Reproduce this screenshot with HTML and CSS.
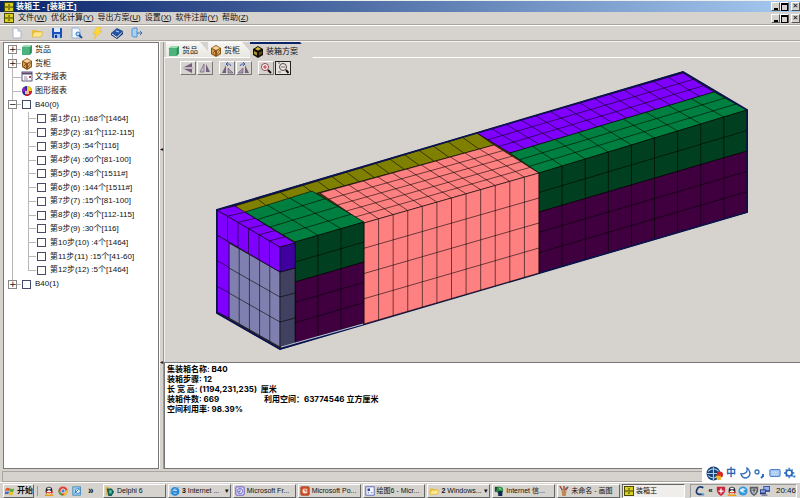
FILE: index.html
```html
<!DOCTYPE html>
<html lang="zh-CN">
<head>
<meta charset="utf-8">
<title>装箱王</title>
<link rel="stylesheet" href="styles.css">
</head>
<body>
<svg class="defs" aria-hidden="true">
  <symbol id="app" viewBox="0 0 10 10"><rect x="0" y="0" width="10" height="10" fill="#4a4a00"/><rect x="1" y="1" width="8" height="8" fill="#d8d020"/><path d="M1 5h8M4 3h2M4 7h2" stroke="#3a3a00"/></symbol>
  <symbol id="new" viewBox="0 0 12 12"><path d="M2 1h5l3 3v7H2z" fill="#fff" stroke="#a8b4cc"/><path d="M7 1v3h3" fill="#dce6f8" stroke="#a8b4cc"/></symbol>
  <symbol id="open" viewBox="0 0 12 12"><path d="M1 3h4l1 1h4v6H1z" fill="#e8c040"/><path d="M3 5h9l-2 5H1z" fill="#ffe88c" stroke="#d8a830" stroke-width=".6"/></symbol>
  <symbol id="save" viewBox="0 0 12 12"><rect x="1" y="1" width="10" height="10" rx="1" fill="#1c50b8"/><rect x="3" y="1" width="6" height="4" fill="#d8e8ff"/><rect x="3" y="7" width="6" height="4" fill="#9cc0f4"/><rect x="4" y="8" width="2" height="3" fill="#123a88"/></symbol>
  <symbol id="preview" viewBox="0 0 12 12"><path d="M1 1h6l2 2v8H1z" fill="#f4f8ff" stroke="#90b0dc"/><circle cx="7" cy="7" r="2" fill="#bcdcff" stroke="#3878c0"/><path d="M8 8l3 3" stroke="#24508c" stroke-width="2"/></symbol>
  <symbol id="bolt" viewBox="0 0 12 12"><path d="M6 0h4L8 4h3L3 12l2-5H2z" fill="#ffd83c" stroke="#e8b020" stroke-width=".5"/></symbol>
  <symbol id="book" viewBox="0 0 12 12"><path d="M6 1l6 3-6 6-6-4z" fill="#2454a0"/><path d="M0 6l6 4 6-6v3l-6 5-6-4z" fill="#0c2c68"/><path d="M1 7l5 3.500 5-5" stroke="#e8f0ff" fill="none"/><path d="M5 4l3 1" stroke="#b8d8ff"/></symbol>
  <symbol id="exit" viewBox="0 0 12 12"><path d="M3 1h3v9H3L1 9V2z" fill="#a8d0f4" stroke="#4084c8" stroke-width=".8"/><path d="M6 6h5M9 4l2 2-2 2" stroke="#3474bc" fill="none"/></symbol>
  <symbol id="goods" viewBox="0 0 11 11"><path d="M1 3l2-2h7v7l-2 2H1z" fill="#2c8c5c"/><path d="M1 3l2-2h7L8 3z" fill="#9cdcb4"/><path d="M1 3h7v7H1z" fill="#4cb47c"/></symbol>
  <symbol id="crate" viewBox="0 0 12 12"><path d="M6 0l5 3v6l-5 3-5-3V3z" fill="#8c5418"/><path d="M6 1l4 2-4 2-4-2z" fill="#f4d49c"/><path d="M2 4l3 2v4L2 8z" fill="#dca04c"/><path d="M7 6l3-2v4l-3 2z" fill="#ecc078"/><path d="M3 8l2-2M7 9l3-4" stroke="#503010" stroke-width=".7"/></symbol>
  <symbol id="plan" viewBox="0 0 12 12"><path d="M6 0l5 3v6l-5 3-5-3V3z" fill="#141008"/><path d="M6 1l3 2-3 1.500L3 3z" fill="#d8b838"/><path d="M2 5l3 1.500v3L2 8z" fill="#b49428"/><path d="M7 6.500L10 5v3L7 9.500z" fill="#5c4810"/></symbol>
  <symbol id="report" viewBox="0 0 12 12"><rect x="1" y="1" width="10" height="9" fill="#fff" stroke="#585878"/><path d="M1 2.500h10" stroke="#604870" stroke-width="2"/><path d="M3 6h3M3 8h4" stroke="#98a"/><rect x="8" y="5" width="2" height="2" fill="#a44"/></symbol>
  <symbol id="chart" viewBox="0 0 12 12"><circle cx="6" cy="6" r="5" fill="#2828a0"/><path d="M6 6V1a5 5 0 0 1 5 5z" fill="#f0d020"/><path d="M6 6h5a5 5 0 0 1-7 4.500z" fill="#d82020"/><path d="M6 6L1 7a5 5 0 0 1 2-5z" fill="#8828b0"/><path d="M4 6h4v3H4z" fill="#f0b8a0"/></symbol>
  <symbol id="flipv" viewBox="0 0 12 12"><path d="M10 1v4H2zM10 7v4L2 7z" fill="#74607c"/><path d="M1 6h10" stroke="#a898b0"/></symbol>
  <symbol id="fliph" viewBox="0 0 12 12"><path d="M5 2v8H1z" fill="#c8bccc" stroke="#74607c" stroke-width=".7"/><path d="M7 2v8h4z" fill="#74607c"/></symbol>
  <symbol id="rotl" viewBox="0 0 12 12"><path d="M5 3v8H1z" fill="#74607c"/><path d="M7 6v5h5z" fill="#a898b0" stroke="#74607c" stroke-width=".7"/><path d="M10 4q-1-3-4-2M7 0L5 2l2 2" fill="none" stroke="#405cb0"/></symbol>
  <symbol id="rotr" viewBox="0 0 12 12"><path d="M7 3v8h4z" fill="#74607c"/><path d="M5 6v5H0z" fill="#a898b0" stroke="#74607c" stroke-width=".7"/><path d="M2 4q1-3 4-2M5 0l2 2-2 2" fill="none" stroke="#405cb0"/></symbol>
  <symbol id="zin" viewBox="0 0 12 12"><circle cx="5" cy="5" r="3.500" fill="#fff" stroke="#8c4444"/><path d="M3 5h4M5 3v4" stroke="#c03030"/><path d="M8 8l3 3" stroke="#181010" stroke-width="2"/></symbol>
  <symbol id="zout" viewBox="0 0 12 12"><circle cx="6" cy="5" r="3.500" fill="#ece8e4" stroke="#584848"/><path d="M4 5h4" stroke="#806868"/><path d="M9 8l2.500 3" stroke="#181010" stroke-width="2"/><path d="M1 1h2M1 10h3" stroke="#807878"/></symbol>
  <symbol id="win" viewBox="0 0 12 12"><path d="M1 3q2-2 5 0L5 6Q3 5 0 6z" fill="#e05828"/><path d="M6 3q3 1 5 0l-1 4q-3 1-5-1z" fill="#58b040"/><path d="M0 7q3-1 5 0l-1 3q-2-1-4 0z" fill="#3870d8"/><path d="M5 7q3 1 5 0l-1 4q-3 1-5-1z" fill="#f0c028"/></symbol>
  <symbol id="qq" viewBox="0 0 12 12"><ellipse cx="6" cy="6" rx="4" ry="5" fill="#1c1c24"/><ellipse cx="6" cy="8" rx="3" ry="3" fill="#fff"/><path d="M2 6q4 3 8 0l1 2-5 1-4-1z" fill="#e03820"/><path d="M1 10h10v2H1z" fill="#e8a020"/><path d="M4 3h4" stroke="#fff" stroke-width="2"/></symbol>
  <symbol id="chrome" viewBox="0 0 12 12"><circle cx="6" cy="6" r="5.500" fill="#e04030"/><path d="M1 4l5 8A6 6 0 0 1 1 4z" fill="#40a848"/><path d="M11 4a6 6 0 0 1-5 8l3-5z" fill="#f4cc28"/><circle cx="6" cy="6" r="2.500" fill="#4080dc" stroke="#fff"/></symbol>
  <symbol id="mail" viewBox="0 0 12 12"><rect x="1" y="1" width="9" height="10" fill="#9cd4f4" stroke="#3880b8"/><circle cx="7" cy="6" r="3" fill="#e4f6ff" stroke="#2c78b4"/><path d="M3 9l5-5" stroke="#1c68ac"/></symbol>
  <symbol id="delphi" viewBox="0 0 12 12"><path d="M1 1h4v10H1z" fill="#e0b850"/><path d="M2 3h6l3 4-3 5H4z" fill="#146058"/><path d="M5 5h3v4H5z" fill="#58c0a4"/></symbol>
  <symbol id="ie" viewBox="0 0 12 12"><circle cx="6" cy="6.500" r="4" fill="none" stroke="#2088dc" stroke-width="2.500"/><path d="M3 7h7" stroke="#2088dc" stroke-width="2"/><path d="M0 10Q3 1 12 2" fill="none" stroke="#70b8ec"/></symbol>
  <symbol id="fp" viewBox="0 0 12 12"><rect x="1" y="1" width="10" height="10" rx="1" fill="#dcd8fc" stroke="#544cb4"/><circle cx="6" cy="6" r="3" fill="#fff" stroke="#5c50c8"/><path d="M6 4v3H4" stroke="#403898" fill="none"/></symbol>
  <symbol id="ppt" viewBox="0 0 12 12"><rect x="1" y="1" width="10" height="10" rx="1" fill="#d8542c" stroke="#a03414"/><circle cx="6" cy="6" r="3" fill="#fce4d8"/><path d="M6 3v3h3" stroke="#c04018" fill="none"/></symbol>
  <symbol id="visio" viewBox="0 0 12 12"><rect x="1" y="1" width="10" height="10" fill="#f4f6ff" stroke="#5060b8"/><path d="M3 3h3v3H3z" fill="#3848a8"/><path d="M7 8h2M4 9V7" stroke="#5868c8"/></symbol>
  <symbol id="iis" viewBox="0 0 12 12"><path d="M1 1h6v6H1z" fill="#184c28"/><circle cx="7" cy="5" r="4" fill="#30904c"/><path d="M5 6h5v6H5z" fill="#102c4c"/><path d="M6 3l3 1" stroke="#c8f0b0"/></symbol>
  <symbol id="paint" viewBox="0 0 12 12"><path d="M3 5h6l-1 7H4z" fill="#c08850"/><path d="M4 5L1 0M6 5V0M8 5l3-4" stroke="#a03c24" stroke-width="1.500"/><path d="M7 5l2-4" stroke="#2868a8"/></symbol>
  <symbol id="shield" viewBox="0 0 12 12"><path d="M1 1h10v5q-1 4-5 6Q2 10 1 6z" fill="#c82838"/><path d="M6 3v6M3 6h6" stroke="#fff" stroke-width="1.500"/></symbol>
  <symbol id="shield2" viewBox="0 0 12 12"><path d="M1 1h10v5q-1 4-5 6Q2 10 1 6z" fill="#585c64"/><path d="M3 3h6v3q-1 3-3 4Q4 9 3 6z" fill="#c4c8cc"/><path d="M4 5h4M6 3v5" stroke="#34383c"/></symbol>
  <symbol id="ball" viewBox="0 0 12 12"><circle cx="6" cy="6" r="5.500" fill="#3498dc"/><path d="M2 5q3-4 7-1l-3 2 3 2Q4 9 2 5z" fill="#d8f0ff"/></symbol>
  <symbol id="net" viewBox="0 0 12 12"><rect x="4" y="0" width="8" height="7" fill="#384898"/><rect x="5" y="1" width="6" height="4" fill="#90b0f0"/><rect x="0" y="4" width="7" height="6" fill="#283878"/><rect x="1" y="5" width="5" height="3" fill="#80a0e8"/><path d="M2 11h7" stroke="#404878"/></symbol>
  <symbol id="cring" viewBox="0 0 12 12"><path d="M10 2Q4-1 2 5t8 5" fill="none" stroke="#1c3870" stroke-width="2"/><path d="M8 9l3 2" stroke="#60a0d8" stroke-width="2"/></symbol>
  <symbol id="ime" viewBox="0 0 16 14"><circle cx="7" cy="7" r="6.500" fill="#184074"/><path d="M2 5q5-5 10 0M2 9q5 4 8 1M7 1v12M1 7h12" stroke="#a8d4f4" fill="none"/><circle cx="13" cy="8" r="3" fill="#d82820"/><path d="M9 9h5v4q-4 1-5-4z" fill="#f0b828"/></symbol>
  <symbol id="moon" viewBox="0 0 12 12"><path d="M8 1q1 6-6 6 1 4 5 4 4-1 4-5-1-4-3-5z" fill="#fff" stroke="#2c6cc0" stroke-width="1.300"/></symbol>
  <symbol id="punct" viewBox="0 0 12 12"><circle cx="3" cy="5" r="2" fill="none" stroke="#2c6cc0" stroke-width="1.300"/><path d="M9 7v2l-2 2" stroke="#2c6cc0" stroke-width="2" fill="none"/></symbol>
  <symbol id="keys" viewBox="0 0 14 12"><rect x="1" y="2" width="12" height="8" rx="1" fill="#a8c8f0" stroke="#2c6cc0"/><path d="M3 5h8M4 8h6" stroke="#fff" stroke-dasharray="1 1"/></symbol>
  <symbol id="gear" viewBox="0 0 14 12"><circle cx="6" cy="6" r="3.500" fill="none" stroke="#2468bc" stroke-width="2"/><path d="M6 0v2M6 10v2M0 6h2M10 6h2M2 2l1 1M9 9l1 1M2 10l1-1M9 3l1-1" stroke="#2468bc" stroke-width="1.500"/><circle cx="12" cy="10" r="1.500" fill="#5090d8"/></symbol>
</svg>

<header class="titlebar">
  <svg class="i10"><use href="#app"/></svg>
  <h1>装箱王 - [装箱王]</h1>
  <div class="winbtns"><button aria-label="最小化" class="min"></button><button aria-label="还原" class="restore"></button><button aria-label="关闭" class="close">✕</button></div>
</header>
<nav class="menubar">
  <svg class="i10"><use href="#app"/></svg>
  <button>文件(<u>W</u>)</button><button>优化计算(<u>Y</u>)</button><button>导出方案(<u>U</u>)</button><button>设置(<u>X</u>)</button><button>软件注册(<u>Y</u>)</button><button>帮助(<u>Z</u>)</button>
  <div class="winbtns"><button aria-label="最小化" class="min"></button><button aria-label="还原" class="restore"></button><button aria-label="关闭" class="close">✕</button></div>
</nav>
<div class="toolbar">
  <button aria-label="新建"><svg><use href="#new"/></svg></button>
  <button aria-label="打开"><svg><use href="#open"/></svg></button>
  <button aria-label="保存"><svg><use href="#save"/></svg></button>
  <button aria-label="预览"><svg><use href="#preview"/></svg></button>
  <button aria-label="计算"><svg><use href="#bolt"/></svg></button>
  <button aria-label="手册"><svg><use href="#book"/></svg></button>
  <button aria-label="退出"><svg><use href="#exit"/></svg></button>
</div>

<main class="work">
  <aside class="panel">
    <ul class="tree">
      <li class="first"><button class="exp" aria-label="展开">+</button><svg><use href="#goods"/></svg><span>货品</span></li>
      <li><button class="exp" aria-label="展开">+</button><svg><use href="#crate"/></svg><span>货柜</span></li>
      <li><i class="exp none"></i><svg><use href="#report"/></svg><span>文字报表</span></li>
      <li><i class="exp none"></i><svg><use href="#chart"/></svg><span>图形报表</span></li>
      <li><button class="exp" aria-label="折叠">−</button><label><input type="checkbox">B40(0)</label></li>
      <li class="step"><label><input type="checkbox">第1步(1) :168个[1464]</label></li>
      <li class="step"><label><input type="checkbox">第2步(2) :81个[112-115]</label></li>
      <li class="step"><label><input type="checkbox">第3步(3) :54个[116]</label></li>
      <li class="step"><label><input type="checkbox">第4步(4) :60个[81-100]</label></li>
      <li class="step"><label><input type="checkbox">第5步(5) :48个[1511#]</label></li>
      <li class="step"><label><input type="checkbox">第6步(6) :144个[1511#]</label></li>
      <li class="step"><label><input type="checkbox">第7步(7) :15个[81-100]</label></li>
      <li class="step"><label><input type="checkbox">第8步(8) :45个[112-115]</label></li>
      <li class="step"><label><input type="checkbox">第9步(9) :30个[116]</label></li>
      <li class="step"><label><input type="checkbox">第10步(10) :4个[1464]</label></li>
      <li class="step"><label><input type="checkbox">第11步(11) :15个[41-60]</label></li>
      <li class="step end"><label><input type="checkbox">第12步(12) :5个[1464]</label></li>
      <li class="last"><button class="exp" aria-label="展开">+</button><label><input type="checkbox">B40(1)</label></li>
    </ul>
  </aside>
  <div class="splitter"><span>◂</span><span>◂</span></div>
  <section class="content">
    <div class="tabs">
      <button><svg><use href="#goods"/></svg>货品</button>
      <button><svg><use href="#crate"/></svg>货柜</button>
      <button class="on"><svg><use href="#plan"/></svg>装箱方案</button>
    </div>
    <div class="view">
      <svg id="scene" viewBox="165 57 635 304" preserveAspectRatio="xMinYMin meet" role="img" aria-label="装箱方案"></svg>
      <div class="viewbar">
        <div><button aria-label="上下翻转"><svg><use href="#flipv"/></svg></button><button aria-label="左右翻转"><svg><use href="#fliph"/></svg></button></div>
        <div><button aria-label="左转"><svg><use href="#rotl"/></svg></button><button aria-label="右转"><svg><use href="#rotr"/></svg></button></div>
        <div><button aria-label="放大"><svg><use href="#zin"/></svg></button><button class="pressed" aria-label="缩小"><svg><use href="#zout"/></svg></button></div>
      </div>
    </div>
    <div class="info">
      <p>集装箱名称: B40</p>
      <p>装箱步骤: 12</p>
      <p>长 宽 高: (1194,231,235)&nbsp; 厘米</p>
      <p class="pair"><span>装箱件数: 669</span><span>利用空间：63774546 立方厘米</span></p>
      <p>空间利用率: 98.39%</p>
    </div>
  </section>
</main>
<div class="status"></div>

<footer class="taskbar">
  <button class="start"><svg><use href="#win"/></svg>开始</button>
  <div class="quick"><svg><use href="#qq"/></svg><svg><use href="#chrome"/></svg><svg><use href="#mail"/></svg><span>»</span></div>
  <div class="tasks">
    <button><svg><use href="#delphi"/></svg><span>Delphi 6</span></button>
    <button><svg><use href="#ie"/></svg><span><b>3</b> Internet ...</span><i>▾</i></button>
    <button><svg><use href="#fp"/></svg><span>Microsoft Fr...</span></button>
    <button><svg><use href="#ppt"/></svg><span>Microsoft Po...</span></button>
    <button><svg><use href="#visio"/></svg><span>绘图6 - Micr...</span></button>
    <button><svg><use href="#open"/></svg><span><b>2</b> Windows...</span><i>▾</i></button>
    <button><svg><use href="#iis"/></svg><span>Internet 信...</span></button>
    <button><svg><use href="#paint"/></svg><span>未命名 - 画图</span></button>
    <button class="active"><svg><use href="#app"/></svg><span>装箱王</span></button>
  </div>
  <div class="tray"><svg><use href="#cring"/></svg><span>«</span><svg><use href="#shield"/></svg><svg><use href="#qq"/></svg><svg><use href="#ball"/></svg><svg><use href="#shield2"/></svg><svg><use href="#net"/></svg><time>20:46</time></div>
</footer>
<div class="ime"><svg class="logo"><use href="#ime"/></svg><b>中</b><svg><use href="#moon"/></svg><svg><use href="#punct"/></svg><svg><use href="#keys"/></svg><svg><use href="#gear"/></svg></div>
<script src="scene.js"></script>
</body>
</html>
```
FILE: scene.js
```js
// Each face: fill, four corners (a-b is the column direction, a-d the row direction), columns, rows.
const faces = [
  ["#808000", [235,205], [477,132], [494,144], [244,212], [0, .094, .188, .281, .341, .401, .461, .521, .581, .641, .701, .761, .82, .88, .94, 1], 1],
  ["#ff8080", [320,192], [494,144], [539,172], [364,222], 12, 5],
  ["#ff8080", [364,222], [539,172], [539,272], [364,323], 12, 4],
  ["#008040", [245,211], [312,190], [364,221], [295,241], 3, 4],
  ["#004020", [295,241], [364,221], [364,261], [295,281], 3, 2],
  ["#400040", [295,281], [364,261], [364,322], [295,342], 3, 3],
  ["#8000ff", [477,132], [683,72], [714,91], [510,152], 14, 3],
  ["#008040", [510,152], [714,91], [747,109], [539,172], 9, 3],
  ["#004020", [539,172], [747,109], [747,150], [539,211], 9, 2],
  ["#400040", [539,211], [747,150], [747,211], [539,272], 9, 3],
  ["#8080b0", [229,242], [280,271], [280,346], [229,317], 5, 3],
  ["#404060", [280,271], [295,267], [295,342], [280,346], 1, 3],
  ["#8000ff", [217,234], [229,241], [229,317], [217,311], 1, 3],
  ["#8000ff", [217,209], [280,246], [280,271], [217,234], 6, 1],
  ["#8000ff", [217,209], [235,205], [295,242], [280,246], 1, 6],
  ["#4000a0", [280,246], [295,242], [295,267], [280,271], 1, 1]
];
const scene = document.getElementById("scene");
const mix = (p, q, t) => [p[0] + (q[0] - p[0]) * t, p[1] + (q[1] - p[1]) * t];
const steps = n => Array.isArray(n) ? n : Array.from({ length: n + 1 }, (_, i) => i / n);
function path(d, fill, stroke, width) {
  const el = document.createElementNS("http://www.w3.org/2000/svg", "path");
  el.setAttribute("d", d);
  el.setAttribute("fill", fill);
  el.setAttribute("stroke", stroke);
  el.setAttribute("stroke-width", width);
  scene.appendChild(el);
}
path("M217 209L683 71L747 109V211L280 348L217 312Z", "#403c10", "#101850", 2);
for (const [fill, a, b, c, d, cols, rows] of faces) {
  let grid = "";
  for (const t of steps(cols)) grid += `M${mix(a, b, t)}L${mix(d, c, t)}`;
  for (const t of steps(rows)) grid += `M${mix(a, d, t)}L${mix(b, c, t)}`;
  path(`M${a}L${b}L${c}L${d}Z`, fill, "none", 0);
  path(grid, "none", "rgba(0,0,0,.72)", .8);
}
path("M217 312V209L683 71L747 109V211L539 272M364 323L280 348L217 312", "none", "#0c1450", 1.3);
path("M281 346L363 323", "none", "#b4c0e0", 1.2);
```
FILE: styles.css
```css
* { box-sizing: border-box; }
body {
  margin: 0; height: 100vh; display: flex; flex-direction: column;
  background: #d6d3ce; color: #111; overflow: hidden;
  font: 8px/10px "Liberation Sans", "Noto Sans CJK SC", sans-serif;
}
button { font: inherit; color: inherit; border: 0; padding: 0; margin: 0; background: none; white-space: nowrap; }
svg { display: block; flex: none; width: 12px; height: 12px; }
.defs { position: absolute; width: 0; height: 0; }
h1, p, ul { margin: 0; padding: 0; }
.i10 { width: 10px; height: 10px; }

.titlebar { display: flex; align-items: center; gap: 2px; height: 12px; flex: none; padding: 0 0 0 4px; border-top: 1px solid #eee; background: linear-gradient(90deg, #0a246a, #a6caf0); color: #fff; }
h1 { font-size: 8px; font-weight: bold; }
.winbtns { display: flex; margin-left: auto; color: #000; }
.winbtns button { width: 9px; height: 9px; background: #d6d3ce; border: 1px solid; border-color: #fff #555 #555 #fff; display: grid; place-items: center; font: bold 7px/7px "DejaVu Sans", sans-serif; }
.winbtns .close { margin-left: 2px; }
.min::before { content: ""; width: 4px; height: 2px; background: #000; align-self: end; }
.restore::before { content: ""; width: 5px; height: 5px; border: 1px solid #000; border-top-width: 2px; }

.menubar { display: flex; align-items: center; gap: 4px; height: 13px; flex: none; padding: 0 0 0 4px; border-bottom: 1px solid #aaa69f; }
.toolbar { display: flex; align-items: center; gap: 8px; height: 16px; flex: none; padding-left: 11px; border-top: 1px solid #fff; border-bottom: 1px solid #aaa69f; }

.work { flex: 1; min-height: 0; display: flex; padding: 0 0 1px 3px; border-top: 1px solid #f4f2ee; }
.panel { width: 156px; flex: none; background: #fff; border: 1px solid #777; }
.tree { list-style: none; display: grid; grid-template-rows: repeat(18, 1fr); height: 248px; --line: #b8b8b8; }
.tree li { display: flex; align-items: center; gap: 4px; padding-left: 4px; white-space: nowrap; background: linear-gradient(var(--line), var(--line)) 8px 0 / 1px 100% no-repeat, linear-gradient(var(--line), var(--line)) 8px 50% / 9px 1px no-repeat; }
.tree .first { background-position: 8px 100%, 8px 50%; background-size: 1px 50%, 9px 1px; }
.tree .last { background-size: 1px 50%, 9px 1px; }
.tree .step { padding-left: 33px; background: linear-gradient(var(--line), var(--line)) 8px 0 / 1px 100% no-repeat, linear-gradient(var(--line), var(--line)) 24px 0 / 1px 100% no-repeat, linear-gradient(var(--line), var(--line)) 24px 50% / 8px 1px no-repeat; }
.tree .end { background-size: 1px 100%, 1px 50%, 8px 1px; }
.tree label { display: flex; align-items: center; gap: 4px; margin-left: 1px; }
.tree input { appearance: none; width: 9px; height: 9px; margin: 0; border: 1px solid #444a68; background: #fff; }
.tree svg { margin-right: -2px; }
.tree .step label { margin: 0; }
.exp { width: 9px; height: 9px; flex: none; border: 1px solid #888; background: #fff; font: 9px/7px "DejaVu Sans", sans-serif; display: grid; place-items: center; }
button.exp { border: 1px solid #888; background: #fff; }
.none { visibility: hidden; }

.splitter { width: 5px; flex: none; display: flex; flex-direction: column; justify-content: space-around; background: #d6d3ce; border-left: 1px solid #fff; border-right: 1px solid #999; font: 6px/8px "DejaVu Sans", sans-serif; }

.content { flex: 1; min-width: 0; display: flex; flex-direction: column; }
.tabs { display: flex; height: 16px; flex: none; padding-left: 2px; border-bottom: 1px solid #fff; }
.tabs button { display: flex; align-items: center; gap: 2px; height: 15px; padding: 1px 15px 0 2px; background: linear-gradient(#f6f5f2, #e8e6e0); border-top: 1px solid #fff; clip-path: polygon(0 0, calc(100% - 13px) 0, 100% 100%, 0 100%); }
.tabs button + button { margin-left: -5px; }
.tabs .on { height: 16px; background: #d6d3ce; border-top: 2px solid #0a246a; }
.view { flex: 1; min-height: 0; display: grid; border-left: 1px solid #eee; overflow: hidden; }
.view > * { grid-area: 1 / 1; }
#scene { width: 100%; height: 100%; min-height: 0; }
.viewbar { display: flex; gap: 6px; padding: 3px 0 0 15px; align-self: start; }
.viewbar div { display: flex; gap: 1px; }
.viewbar button { width: 16px; height: 14px; display: grid; place-items: center; border: 1px solid; border-color: #fff #777 #777 #fff; }
.viewbar .pressed { border-color: #222; background: #e6e3de; }
.info { height: 107px; flex: none; background: #fff; border: 1px solid #777; border-right: 0; padding: 1px 2px; font: bold 8px/10px Inter, "Noto Sans CJK SC", sans-serif; color: #000; }
.pair { display: flex; }
.pair span:first-child { width: 97px; }

.status { height: 11px; flex: none; margin: 1px 0 0 2px; border: 1px solid #aaa69f; border-right: 0; }
.taskbar { display: flex; align-items: center; height: 16px; flex: none; padding: 0 3px; border-top: 1px solid #fff; }
.taskbar svg { width: 10px; height: 10px; }
.taskbar button { height: 14px; display: flex; align-items: center; gap: 2px; padding: 0 1px; border: 1px solid; border-color: #fff #666 #666 #fff; }
.start { width: 31px; flex: none; font-weight: bold; }
.quick { display: flex; align-items: center; gap: 4px; width: 63px; flex: none; margin: 0 3px; padding-left: 6px; border-left: 1px solid #999; font-size: 10px; }
.quick span { margin-left: 2px; font-weight: bold; }
.tasks { flex: 1; min-width: 0; display: grid; grid-template-columns: repeat(9, minmax(0, 1fr)); gap: 2px; font-size: 7px; }
.tasks i { margin-left: auto; font-style: normal; }
.taskbar .active { border-color: #666 #fff #fff #666; background: #f0eeea; }
.tray { width: 107px; flex: none; display: flex; align-items: center; gap: 1px; margin-left: 5px; padding-left: 4px; border: 1px solid; border-color: #999 #fff #fff #999; height: 14px; }
.tray span { width: 9px; text-align: center; font-weight: bold; }
.tray time { margin-left: auto; }

.ime { position: absolute; right: 0; bottom: 16px; width: 98px; height: 18px; display: flex; align-items: center; gap: 3px; padding-left: 4px; background: #fff; color: #2468bc; font-size: 10px; }
.ime .logo { width: 17px; height: 15px; }
```
